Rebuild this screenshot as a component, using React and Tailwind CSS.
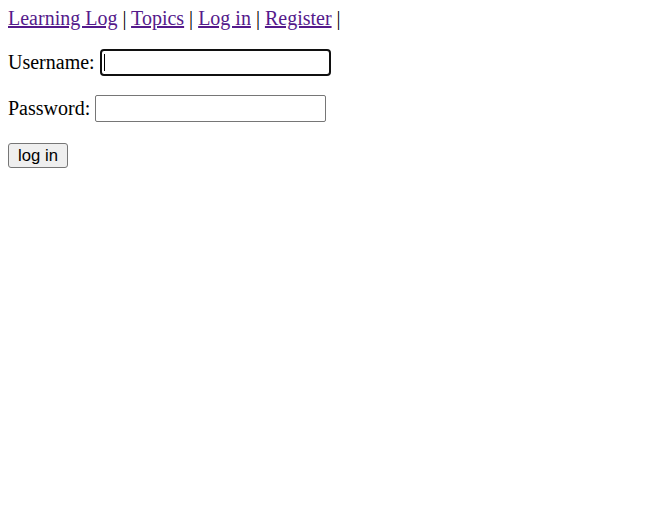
import { useState } from 'react';

export default function App() {
  const [username, setUsername] = useState('');
  const [password, setPassword] = useState('');

  return (
    <div className="min-h-screen bg-white px-[8px] pt-[7px] text-[20px] text-black font-['Liberation_Serif',serif]">
      {/* top nav */}
      <div className="h-[23px] leading-[23px] whitespace-pre">
        <a href="#" className="text-[#551a8b] underline">Learning Log</a>
        {' | '}
        <a href="#" className="text-[#551a8b] underline">Topics</a>
        {' | '}
        <a href="#" className="text-[#551a8b] underline">Log in</a>
        {' | '}
        <a href="#" className="text-[#551a8b] underline">Register</a>
        {' |'}
      </div>

      <form onSubmit={(e) => e.preventDefault()}>
        <div className="mt-[19px] flex items-center gap-[5px]">
          <label htmlFor="id_username" className="leading-[23px]">Username:</label>
          <div className="relative">
            <input
              id="id_username"
              type="text"
              value={username}
              onChange={(e) => setUsername(e.target.value)}
              className="block w-[231px] h-[27px] px-[3px] bg-white border-2 border-[#101010] rounded-[4px] outline-none text-[16.67px] font-['Liberation_Sans',sans-serif]"
            />
            <span className="absolute left-[4px] top-[5px] h-[17px] w-px bg-black" />
          </div>
        </div>

        <div className="mt-[19px] flex items-center gap-[5px]">
          <label htmlFor="id_password" className="leading-[23px]">Password:</label>
          <input
            id="id_password"
            type="password"
            value={password}
            onChange={(e) => setPassword(e.target.value)}
            className="block w-[231px] h-[27px] px-[3px] bg-white border border-[#767676] rounded-[2px] outline-none text-[16.67px] font-['Liberation_Sans',sans-serif]"
          />
        </div>

        <div className="mt-[21px]">
          <button
            type="submit"
            className="block w-[60px] h-[25px] bg-[#efefef] border border-[#767676] rounded-[3px] text-[16.67px] leading-[19px] text-black font-['Liberation_Sans',sans-serif]"
          >
            log in
          </button>
        </div>
      </form>
    </div>
  );
}
